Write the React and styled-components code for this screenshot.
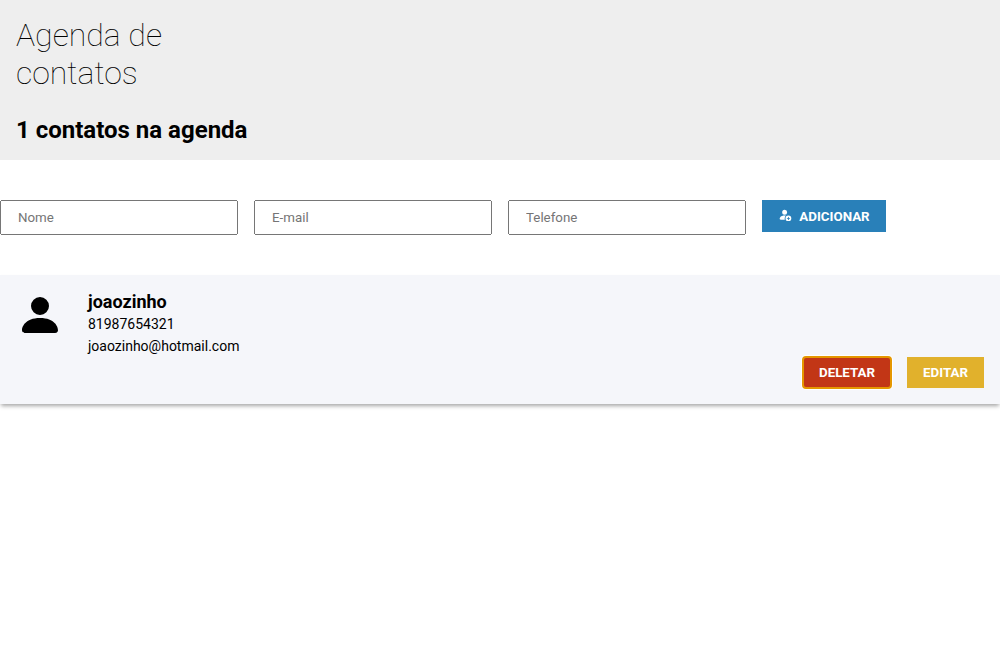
import React from "react";
import styled, { createGlobalStyle } from "styled-components";
import { BsPersonFill, BsPersonFillAdd } from "react-icons/bs";

const GlobalStyle = createGlobalStyle`
  * { margin: 0; padding: 0; box-sizing: border-box; font-family: Roboto, sans-serif; }
  body { min-height: 100vh; background-color: #fff; }
`;

const Header = styled.header`
  background-color: #eee;
  height: 160px;
  padding: 16px;
`;

const Title = styled.h1`
  width: 180px;
  font-size: 32px;
  line-height: 38px;
  font-weight: 100;
`;

const Count = styled.h2`
  margin-top: 24px;
  font-size: 24px;
  line-height: 28px;
  font-weight: 700;
`;

const Form = styled.form`
  display: flex;
  align-items: flex-start;
  gap: 16px;
  padding: 40px 0;
`;

const Field = styled.input`
  width: 238px;
  height: 35px;
  padding: 8px 16px;
  font-size: 13.3333px;
`;

const Button = styled.button`
  display: flex;
  align-items: center;
  justify-content: center;
  width: ${(p) => p.$width};
  height: ${(p) => p.$height || "31px"};
  border: none;
  border-radius: ${(p) => (p.$focused ? "3px" : "0")};
  background-color: ${(p) => p.$color};
  color: #fff;
  font-size: 13.3333px;
  font-weight: 700;
  text-transform: uppercase;
  outline: ${(p) => (p.$focused ? "2px solid #e59700" : "none")};
  outline-offset: -1px;
  box-shadow: ${(p) => (p.$focused ? "0 0 0 2px #fff" : "none")};
  svg { width: 13.3333px; height: 13.3333px; margin: 0 7.6667px 3px 0; }
`;

const Card = styled.li`
  display: flex;
  height: 129px;
  padding: 16px;
  background-color: #f5f6fa;
  box-shadow: 0 3px 4px -1px rgba(0, 0, 0, 0.35);
  list-style: none;
`;

const Avatar = styled.div`
  width: 72px;
  svg { display: block; }
`;

const Info = styled.div`
  flex: 1;
`;

const Name = styled.h3`
  font-size: 18px;
  line-height: 22px;
`;

const Detail = styled.p`
  font-size: 14px;
  line-height: 22px;
`;

const Actions = styled.div`
  display: flex;
  align-self: flex-end;
  gap: 16px;
`;

export default function App() {
  return (
    <>
      <GlobalStyle />
      <Header>
        <Title>Agenda de contatos</Title>
        <Count>1 contatos na agenda</Count>
      </Header>
      <Form>
        <Field placeholder="Nome" />
        <Field placeholder="E-mail" />
        <Field placeholder="Telefone" />
        <Button type="button" $color="#2980b9" $width="124px" $height="32px">
          <BsPersonFillAdd />
          Adicionar
        </Button>
      </Form>
      <ul>
        <Card>
          <Avatar><BsPersonFill size={48} /></Avatar>
          <Info>
            <Name>joaozinho</Name>
            <Detail>81987654321</Detail>
            <Detail>joaozinho@hotmail.com</Detail>
          </Info>
          <Actions>
            <Button $color="#c23616" $width="88px" $focused>Deletar</Button>
            <Button $color="#e1b12c" $width="77px">Editar</Button>
          </Actions>
        </Card>
      </ul>
    </>
  );
}
